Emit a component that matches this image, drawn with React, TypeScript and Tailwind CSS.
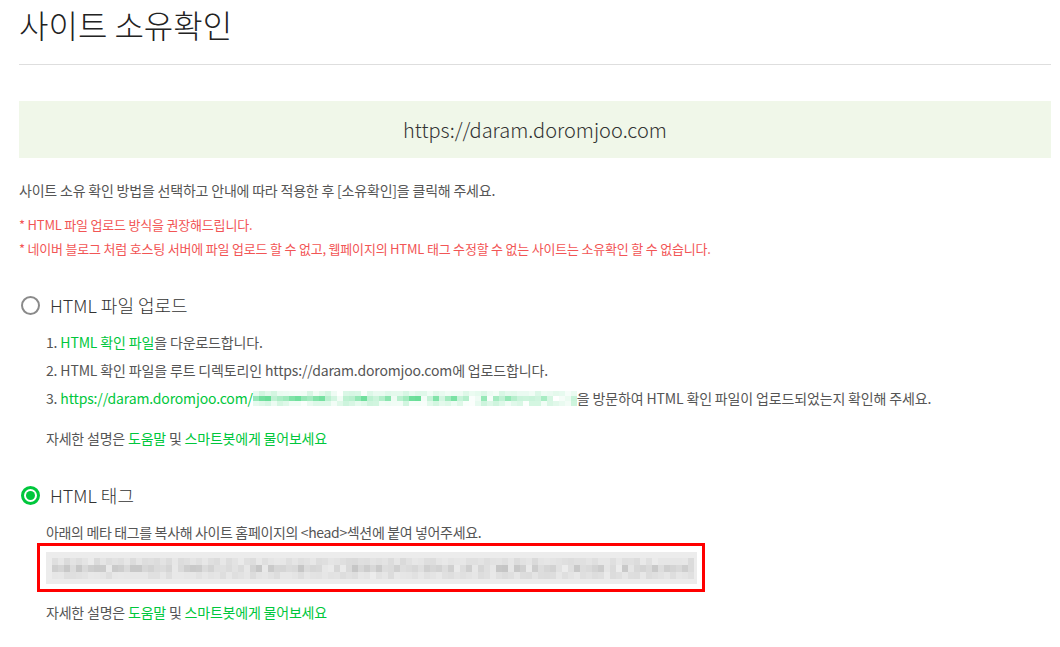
import React from "react";

const font = { fontFamily: '"Noto Sans CJK KR", "Noto Sans", sans-serif' };

// deterministic noise for the mosaic (blurred) parts of the screenshot
function rng(seed: number) {
  let s = seed;
  return () => {
    s = (s * 1103515245 + 12345) % 2147483648;
    return s / 2147483648;
  };
}

function Mosaic({
  cols,
  rows,
  cell,
  rowH,
  seed,
  color,
  strength,
}: {
  cols: number;
  rows: number;
  cell: number;
  rowH: number;
  seed: number;
  color: [number, number, number];
  strength: number[];
}) {
  const rand = rng(seed);
  const cells: React.ReactNode[] = [];
  for (let r = 0; r < rows; r++) {
    for (let c = 0; c < cols; c++) {
      const gap = rand() < 0.15;
      const a = gap ? rand() * 0.08 : (0.25 + rand() * 0.75) * strength[r];
      cells.push(
        <div
          key={`${r}-${c}`}
          style={{
            width: cell,
            height: rowH,
            background: `rgba(${color[0]},${color[1]},${color[2]},${a.toFixed(3)})`,
          }}
        />,
      );
    }
  }
  return (
    <div className="inline-grid align-middle" style={{ gridTemplateColumns: `repeat(${cols}, ${cell}px)` }}>
      {cells}
    </div>
  );
}

function Radio({ checked }: { checked?: boolean }) {
  if (checked) {
    return (
      <span className="flex h-[19px] w-[19px] items-center justify-center rounded-full border-[3px] border-[#00c73c] bg-white">
        <span className="h-[9px] w-[9px] rounded-full bg-[#00c73c]" />
      </span>
    );
  }
  return <span className="h-[19px] w-[19px] rounded-full border-2 border-[#8a8a8a] bg-white" />;
}

function HelpLine() {
  return (
    <p className="text-[14px] leading-[20px] tracking-[-0.2px] text-[#555]">
      자세한 설명은 <span className="text-[#00c73c]">도움말</span> 및{" "}
      <span className="text-[#00c73c]">스마트봇에게 물어보세요</span>
    </p>
  );
}

export default function App() {
  return (
    <div className="min-h-[647px] bg-white pl-[19px] pr-[9px]" style={font}>
      <div className="border-b border-[#dedede] pt-[2px]">
        <h1 className="h-[62px] text-[32px] leading-[44px] font-light text-[#222]">사이트 소유확인</h1>
      </div>

      <div className="mt-[36px] flex h-[57px] items-center justify-center bg-[#f0f7e9] text-[20px] font-light text-[#333]">
        https://daram.doromjoo.com
      </div>

      <p className="mt-[22px] text-[14px] leading-[20px] tracking-[-0.2px] text-[#555]">
        사이트 소유 확인 방법을 선택하고 안내에 따라 적용한 후 [소유확인]을 클릭해 주세요.
      </p>

      <div className="mt-[13px] text-[13px] leading-[24px] tracking-[-0.2px] text-[#f25555]">
        <p>* HTML 파일 업로드 방식을 권장해드립니다.</p>
        <p>* 네이버 블로그 처럼 호스팅 서버에 파일 업로드 할 수 없고, 웹페이지의 HTML 태그 수정할 수 없는 사이트는 소유확인 할 수 없습니다.</p>
      </div>

      {/* HTML file upload */}
      <div className="mt-[29px] flex h-[30px] items-center gap-[10px] pl-[2px]">
        <Radio />
        <span className="text-[18px] font-light text-[#333]">HTML 파일 업로드</span>
      </div>

      <div className="pl-[27px]">
        <ol className="mt-[8px] text-[14px] leading-[28px] tracking-[-0.15px] text-[#555]">
          <li>
            1. <span className="text-[#00c73c]">HTML 확인 파일</span>을 다운로드합니다.
          </li>
          <li>2. HTML 확인 파일을 루트 디렉토리인 https://daram.doromjoo.com에 업로드합니다.</li>
          <li className="flex items-center">
            <span>3.&nbsp;</span>
            <span className="text-[#00c73c]">https://daram.doromjoo.com/</span>
            <Mosaic
              cols={54}
              rows={3}
              cell={6}
              rowH={5}
              seed={7}
              color={[0, 199, 80]}
              strength={[0.18, 0.6, 0.2]}
            />
            <span>을 방문하여 HTML 확인 파일이 업로드되었는지 확인해 주세요.</span>
          </li>
        </ol>
        <div className="mt-[16px]">
          <HelpLine />
        </div>
      </div>

      {/* HTML tag */}
      <div className="mt-[32px] flex h-[30px] items-center gap-[10px] pl-[2px]">
        <Radio checked />
        <span className="text-[18px] font-light text-[#333]">HTML 태그</span>
      </div>

      <div className="pl-[27px]">
        <p className="mt-[12px] text-[14px] leading-[20px] tracking-[-0.35px] text-[#555]">
          아래의 메타 태그를 복사해 사이트 홈페이지의 &lt;head&gt;섹션에 붙여 넣어주세요.
        </p>
      </div>

      <div className="mt-[1px] ml-[18px] w-[668px] border-[3px] border-[#ff0000] pt-[6px] pr-[5px] pb-[5px] pl-[6px]">
        <div className="flex h-[32px] items-center overflow-hidden bg-[#ececec] pl-[6px]">
          <Mosaic
            cols={107}
            rows={3}
            cell={6}
            rowH={7}
            seed={23}
            color={[150, 150, 150]}
            strength={[0.2, 0.45, 0.18]}
          />
        </div>
      </div>

      <div className="mt-[10px] pl-[27px]">
        <HelpLine />
      </div>
    </div>
  );
}
